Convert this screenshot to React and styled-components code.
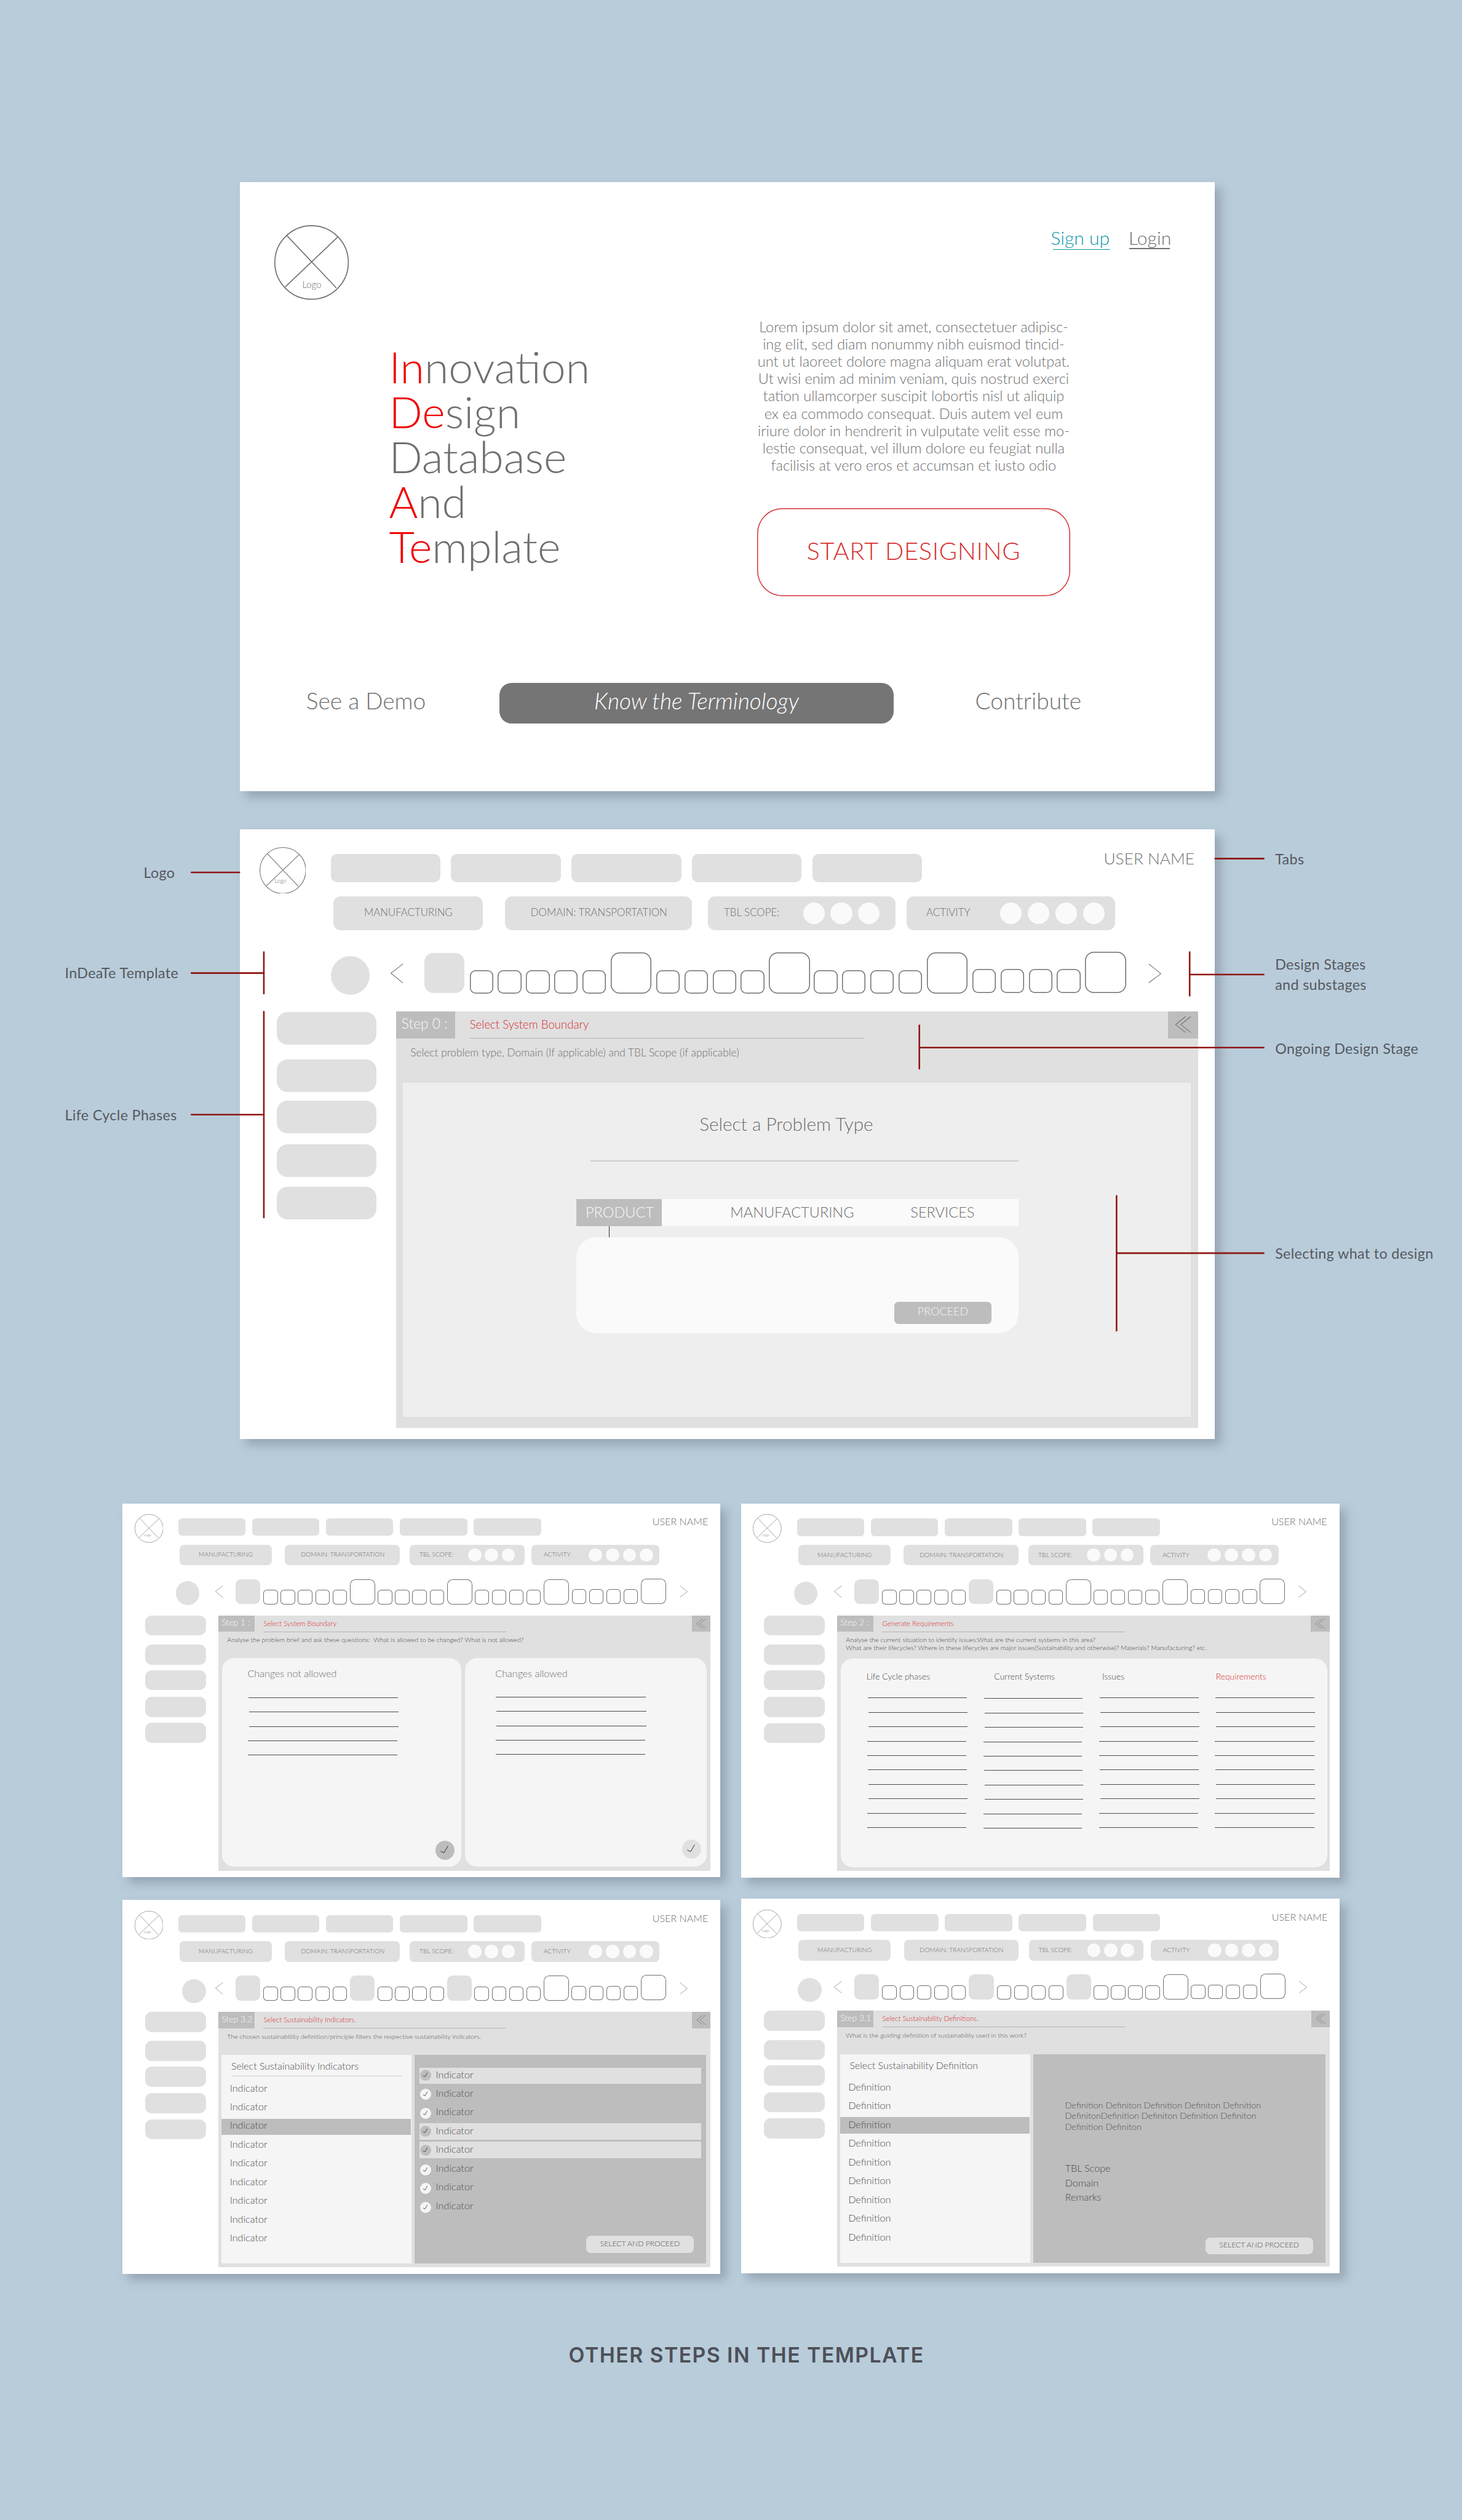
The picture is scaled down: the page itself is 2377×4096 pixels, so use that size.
import React from 'react';
import styled, { createGlobalStyle, css } from 'styled-components';

/* Every length is a multiple of --u, so a board can be scaled by changing one variable. */
const u = (n) => `calc(var(--u) * ${n})`;

const INK = '#707070';
const DARK = '#464646';
const FILL = '#e0e0e0';
const MID = '#bdbdbd';
const RED = '#d63030';
const LEADER = '#8e1511';

const GlobalStyle = createGlobalStyle`
  html, body { margin: 0; padding: 0; background: #b9ccda; }
  *, *::before, *::after { box-sizing: border-box; }
`;

const Page = styled.main`
  --u: 0.5826px;
  width: 2377px;
  height: 4096px;
  overflow: hidden;
  padding-top: ${u(508)};
  background: #b9ccda;
  font-family: Lato, 'Liberation Sans', sans-serif;
  font-weight: 300;
  line-height: 1.2;
  color: ${INK};
  white-space: pre;
`;

const cardShadow = css`
  box-shadow: 10px 10px 15px rgba(88, 98, 112, 0.36);
`;

/* ---------- Landing screen ---------- */

const Landing = styled.section`
  width: ${u(2720)};
  height: ${u(1699.5)};
  margin-left: ${u(669.5)};
  background: #fff;
  ${cardShadow}
`;

const LandingTop = styled.header`
  display: flex;
  height: ${u(329)};
  padding: ${u(121)} ${u(121)} 0 ${u(96.5)};
`;

const LogoMark = styled.svg`
  flex: none;
  width: ${(p) => u(p.$size)};
  height: ${(p) => u(p.$size)};
  fill: none;
  stroke: ${INK};
  stroke-width: 2.8;
  text {
    fill: ${INK};
    stroke: none;
    font-size: 25.5px;
  }
`;

const AuthLinks = styled.nav`
  display: flex;
  gap: ${u(53)};
  margin-left: auto;
  padding-top: ${u(3.3)};
`;

const AuthLink = styled.a`
  height: ${(p) => u(p.$drop)};
  color: ${(p) => p.$tone};
  font-size: ${u(51.7)};
  &::after {
    content: '';
    display: block;
    height: 1.5px;
    margin: ${(p) => u(p.$drop - 62)} ${(p) => u(p.$trimRight)} 0 ${(p) => u(p.$trimLeft)};
    background: ${(p) => p.$tone};
  }
`;

const Hero = styled.div`
  display: flex;
  height: ${u(826.5)};
  padding-left: ${u(416)};
`;

const Acronym = styled.h1`
  width: ${u(1027.2)};
  margin: ${u(122)} 0 0;
  font-size: ${u(123)};
  font-weight: 300;
  line-height: ${u(125.4)};
`;

const AcronymLetters = styled.span`
  color: #f00000;
`;

const Pitch = styled.div`
  width: ${u(874)};
  padding-top: ${u(50.2)};
`;

const Blurb = styled.p`
  margin: 0;
  text-align: center;
  font-size: ${u(40.5)};
  line-height: ${u(48.3)};
`;

const StartButton = styled.div`
  display: flex;
  align-items: center;
  justify-content: center;
  height: ${u(245)};
  margin-top: ${u(96.6)};
  padding-bottom: ${u(11)};
  border-radius: ${u(70)};
  box-shadow: inset 0 0 0 1.5px ${RED};
  color: ${RED};
  font-size: ${u(68.5)};
  letter-spacing: ${u(1.1)};
`;

const LandingFooter = styled.footer`
  display: grid;
  grid-template-columns: ${u(539)} ${u(1101)} 1fr;
  height: ${u(113)};
  margin-top: ${u(241.8)};
  padding-left: ${u(185)};
  font-size: ${u(63.7)};
`;

const FooterLink = styled.a`
  display: flex;
  align-items: center;
  padding: 0 0 ${u(12)} ${(p) => u(p.$indent)};
`;

const FooterButton = styled(FooterLink)`
  justify-content: center;
  border-radius: ${u(34)};
  background: #757575;
  color: #fff;
  font-style: italic;
`;

/* ---------- Board shell ---------- */

const Board = styled.section`
  --u: ${(p) => 0.5826 * p.$scale}px;
  flex: none;
  width: ${u(2720)};
  height: ${u(1700)};
  background: #fff;
  ${cardShadow}
`;

const BoardHeader = styled.header`
  display: flex;
  height: ${u(281)};
  padding: ${u(49)} ${u(56)} 0 ${u(54)};
`;

const HeaderNav = styled.div`
  flex: 1;
  margin: ${u(19)} 0 0 ${u(69.5)};
`;

const TabRow = styled.div`
  display: flex;
  gap: ${u(29.5)};
`;

const TabBlock = styled.div`
  width: ${u(306.5)};
  height: ${u(79)};
  border-radius: ${u(17)};
  background: ${FILL};
`;

const UserName = styled.div`
  margin: ${u(-13.6)} 0 0 auto;
  font-size: ${u(45.1)};
`;

const ChipRow = styled.div`
  display: flex;
  margin: ${u(40)} 0 0 ${u(7)};
`;

const Chip = styled.div`
  display: flex;
  flex: none;
  align-items: center;
  width: ${(p) => u(p.$width)};
  height: ${u(94)};
  margin-left: ${(p) => u(p.$gap)};
  padding: 0 ${(p) => u(p.$padRight)} 0 ${(p) => u(p.$padLeft)};
  border-radius: ${u(20)};
  background: ${FILL};
  font-size: ${u(28.95)};
`;

const ChipLabel = styled.span`
  padding-bottom: ${u(5)};
`;

const Dots = styled.span`
  display: flex;
  gap: ${(p) => u(p.$gap)};
  margin-left: auto;
`;

const Dot = styled.i`
  width: ${u(60.5)};
  height: ${u(60.5)};
  border-radius: 50%;
  background: #fafafa;
`;

const StageRow = styled.div`
  display: flex;
  height: ${u(115)};
  margin-top: ${u(62.3)};
`;

const BadgeSlot = styled.div`
  flex: none;
  width: ${u(421.3)};
  padding: ${(p) => u(p.$y)} 0 0 ${(p) => u(p.$x)};
`;

const StageBadge = styled.div`
  width: ${u(108.5)};
  height: ${u(108.5)};
  border-radius: 50%;
  background: ${FILL};
`;

const Chevron = styled.svg`
  flex: none;
  width: ${u(36)};
  height: ${u(56)};
  margin: ${u(30)} 0 0 ${(p) => u(p.$before)};
  fill: none;
  stroke: ${INK};
  stroke-width: 1.8;
`;

const Cluster = styled.div`
  display: flex;
  align-items: flex-end;
  gap: ${u(12.8)};
  margin: 0 0 ${(p) => u(p.$raise || 0)} ${(p) => u(p.$before)};
`;

const Substage = styled.div`
  width: ${u(65.8)};
  height: ${u(65.5)};
  border-radius: ${u(16)};
  box-shadow: inset 0 0 0 max(${u(2.6)}, 1px) ${INK};
`;

const Stage = styled.div`
  width: ${u(114.7)};
  height: ${u(114.5)};
  border-radius: ${u(25)};
  ${(p) =>
    p.$filled
      ? css`
          width: ${u(112.7)};
          height: ${u(112.7)};
          margin: 0 ${u(1)} ${u(1.2)};
          background: ${FILL};
        `
      : css`
          box-shadow: inset 0 0 0 max(${u(2.6)}, 1px) ${INK};
        `}
`;

const Workspace = styled.div`
  display: flex;
  margin-top: ${u(50)};
`;

const PhaseList = styled.aside`
  flex: none;
  width: ${u(436)};
  padding: ${u(0.7)} ${u(54.7)} 0 ${u(103.7)};
`;

const Phase = styled.div`
  height: ${u(91)};
  margin-top: ${(p) => u(p.$gap)};
  border-radius: ${u(30)};
  background: ${FILL};
`;

const Panel = styled.div`
  width: ${u(2239)};
  height: ${u(1162)};
  background: ${FILL};
`;

const PanelHead = styled.div`
  height: ${(p) => u(p.$height)};
`;

const PanelBar = styled.div`
  display: flex;
  height: ${u(74.3)};
`;

const StepBadge = styled.div`
  flex: none;
  width: ${u(165.5)};
  padding: ${u(9.8)} 0 0 ${u(15)};
  background: ${MID};
  color: #f9f9f9;
  font-size: ${u(39)};
`;

const PanelTitle = styled.h2`
  width: ${u(1103)};
  height: ${u(76)};
  margin: 0 0 0 ${u(40)};
  padding-top: ${u(17)};
  border-bottom: 1px solid #b4b4b4;
  color: ${RED};
  font-size: ${u(31.9)};
  font-weight: 300;
`;

const Collapse = styled.div`
  width: ${u(84.6)};
  margin-left: auto;
  background: ${MID};
  svg {
    display: block;
    width: 100%;
    height: 100%;
    fill: none;
    stroke: ${INK};
    stroke-width: 1.8;
  }
`;

const PanelNote = styled.p`
  margin: ${(p) => u(p.$drop)} 0 0 ${u(40)};
  color: ${(p) => p.$tone};
  font-size: ${u(29.7)};
  line-height: ${u(35.4)};
`;

/* ---------- Step 0 ---------- */

const ProblemArea = styled.div`
  width: ${u(2199)};
  height: ${u(930.5)};
  margin-left: ${u(19)};
  padding: ${u(82.7)} 0 0 ${u(2)};
  background: #eeeeee;
`;

const ProblemTitle = styled.h3`
  height: ${u(61.5)};
  margin: 0 0 ${u(71)} ${u(825.5)};
  font-size: ${u(51.1)};
  font-weight: 300;
`;

const ProblemRule = styled.hr`
  width: ${u(1196)};
  height: 2px;
  margin: 0 0 ${u(105)} ${u(520.7)};
  border: 0;
  background: #cfcfcf;
`;

const TypeBar = styled.div`
  display: grid;
  grid-template-columns: ${u(239)} ${u(694)} 1fr;
  width: ${u(1234)};
  height: ${u(76)};
  margin-left: ${u(481.5)};
  background: #fafafa;
  font-size: ${u(40.5)};
`;

const TypeTab = styled.div`
  display: flex;
  align-items: center;
  padding: 0 0 ${u(2)} ${(p) => u(p.$indent)};
  ${(p) =>
    p.$active &&
    css`
      background: ${MID};
      color: #f9f9f9;
    `}
`;

const Connector = styled.div`
  width: 1.5px;
  height: ${u(30)};
  margin-left: ${u(572.5)};
  background: #333;
`;

const TypeDetail = styled.div`
  display: flex;
  align-items: flex-end;
  justify-content: flex-end;
  width: ${u(1234)};
  height: ${u(268.4)};
  margin-left: ${u(481.5)};
  padding: 0 ${u(75.5)} ${u(25.5)} 0;
  border-radius: ${u(55)};
  background: #fafafa;
`;

const ProceedButton = styled.div`
  display: flex;
  align-items: center;
  justify-content: center;
  width: ${u(270)};
  height: ${u(62.5)};
  padding-bottom: ${u(6)};
  border-radius: ${u(11)};
  background: ${MID};
  color: #f6f6f6;
  font-size: ${u(31)};
`;

/* ---------- Steps 1 and 2 ---------- */

const Sheets = styled.div`
  display: flex;
  gap: ${u(16.8)};
  padding-left: ${(p) => u(p.$inset)};
`;

const Sheet = styled.div`
  display: flex;
  flex-direction: column;
  width: ${(p) => u(p.$width)};
  height: ${u(948)};
  border-radius: ${u(54)};
  background: #f5f5f5;
`;

const SheetTitle = styled.h3`
  height: ${u(54)};
  margin: ${u(41)} 0 0 ${(p) => u(p.$indent)};
  font-size: ${u(45.1)};
  font-weight: 300;
`;

const Rules = styled.div`
  display: flex;
  flex-direction: column;
  gap: calc(${u(65.5)} - 1px);
  padding: ${(p) => u(p.$top)} 0 0 ${(p) => u(p.$indent)};
`;

const Rule = styled.i`
  flex: none;
  width: ${(p) => u(p.$width)};
  height: 1px;
  margin-left: ${(p) => u(p.$shift)};
  background: #4c4c4c;
`;

const CheckMark = styled.svg`
  flex: none;
  width: ${(p) => u(p.$size)};
  height: ${(p) => u(p.$size)};
  fill: none;
  stroke: #222;
  stroke-width: ${(p) => p.$stroke};
  circle {
    fill: ${(p) => p.$tone};
    stroke: none;
  }
`;

const SheetCheck = styled.div`
  display: flex;
  margin: auto ${(p) => u(p.$right)} ${(p) => u(p.$bottom)} auto;
`;

const TableSheet = styled(Sheet)`
  width: ${u(2210)};
  display: block;
`;

const TableHead = styled.div`
  display: grid;
  grid-template-columns: ${u(580.7)} ${u(491.3)} ${u(516.3)} 1fr;
  height: ${u(104)};
  padding: ${u(57.5)} 0 0 ${u(116)};
  color: ${DARK};
  font-size: ${u(38.9)};
`;

const TableTitle = styled.span`
  color: ${(p) => (p.$accent ? RED : 'inherit')};
`;

const TableColumns = styled.div`
  display: grid;
  grid-template-columns: ${u(528.5)} ${u(525.5)} ${u(527)} 1fr;
  padding-left: ${u(121.5)};
`;

/* ---------- Step 3 ---------- */

const Split = styled.div`
  display: flex;
  gap: ${(p) => u(p.$gap)};
  padding-left: ${(p) => u(p.$inset)};
`;

const ListPane = styled.div`
  width: ${u(865)};
  height: ${u(949)};
  background: #f5f5f5;
  color: #505050;
  font-size: ${u(45.3)};
`;

const ListTitle = styled.h3`
  height: ${(p) => u(p.$height)};
  width: ${u(777.7)};
  margin: 0 0 ${(p) => u(p.$after)} ${u(44)};
  padding-top: ${u(23.5)};
  border-bottom: 1px solid ${(p) => (p.$ruled ? '#cccccc' : 'transparent')};
  font-size: ${u(44.7)};
  font-weight: 300;
`;

const ListItem = styled.div`
  width: ${u(862)};
  height: ${u(74.3)};
  margin-bottom: ${u(10.9)};
  padding: ${(p) => u(p.$lift)} 0 0 ${u(37.5)};
  background: ${(p) => (p.$selected ? MID : 'transparent')};
`;

const DetailPane = styled.div`
  width: ${u(1327)};
  height: ${u(949)};
  background: ${MID};
  color: #555;
`;

const CheckList = styled.div`
  height: ${u(824.6)};
  padding: ${u(58.3)} 0 0 ${u(21.2)};
  font-size: ${u(45.3)};
`;

const CheckRow = styled.div`
  display: flex;
  width: ${u(1283)};
  height: ${u(74.3)};
  margin-bottom: ${u(10.3)};
  padding-left: ${u(5)};
  background: ${(p) => (p.$selected ? FILL : 'transparent')};
`;

const CheckSlot = styled.span`
  display: flex;
  width: ${u(70.5)};
  padding-top: ${(p) => u(p.$drop)};
`;

const CheckLabel = styled.span`
  padding-top: ${(p) => u(p.$drop)};
`;

const DefinitionText = styled.p`
  height: ${u(485.7)};
  margin: 0;
  padding: ${u(207.5)} 0 0 ${u(143)};
  font-size: ${u(40.6)};
  line-height: ${u(49)};
`;

const FactList = styled.div`
  height: ${u(346.9)};
  padding-left: ${u(144)};
  color: #4c4c4c;
  font-size: ${u(45)};
  line-height: ${u(65.2)};
`;

const SelectButton = styled.div`
  display: flex;
  align-items: center;
  justify-content: center;
  width: ${u(489)};
  height: ${u(76)};
  margin-left: ${u(781)};
  padding-bottom: ${u(5)};
  border-radius: ${u(22)};
  background: ${FILL};
  color: #555;
  font-size: ${u(34)};
`;

/* ---------- Annotated board and gallery ---------- */

const Annotated = styled.section`
  position: relative;
  display: flex;
  margin-top: ${u(106.5)};
`;

const Notes = styled.div`
  flex: none;
  width: ${u(669.5)};
  padding-left: ${(p) => u(p.$indent)};
  color: #55595f;
  font-size: ${u(40)};
  font-weight: 400;
  letter-spacing: ${u(0.6)};
  line-height: ${u(55.5)};
`;

const Note = styled.div`
  margin: ${(p) => u(p.$gap)} 0 0 ${(p) => u(p.$indent || 0)};
`;

/* Leader lines run from the margin notes across the board they describe. */
const Leaders = styled.svg`
  position: absolute;
  top: 0;
  left: 0;
  width: ${u(4080)};
  height: ${u(1700)};
  stroke: ${LEADER};
  stroke-width: 4.4;
  fill: none;
`;

const Gallery = styled.section`
  display: flex;
  gap: ${u(58)};
  margin-top: ${u(181)};
  padding-left: ${u(342)};
`;

const GalleryColumn = styled.div`
  display: flex;
  flex-direction: column;
  gap: ${(p) => u(p.$gap)};
`;

const GalleryCaption = styled.h2`
  margin: ${u(193)} 0 0 ${u(1587)};
  color: #4d5058;
  font-family: Inter, Lato, sans-serif;
  font-size: ${u(58)};
  font-weight: 600;
  letter-spacing: ${u(2.45)};
  line-height: ${u(70)};
`;

/* ---------- Pieces ---------- */

const Logo = ({ size, x, y }) => (
  <LogoMark $size={size} viewBox="0 0 208 208">
    <circle cx="104" cy="104" r="102.6" />
    <path d="M34 28L173 175M177.6 32.4L30.3 172.4" />
    <text x={x} y={y}>Logo</text>
  </LogoMark>
);

const Check = ({ size, tone, stroke }) => (
  <CheckMark $size={size} $tone={tone} $stroke={stroke} viewBox="-43 -43 86 86">
    <circle r="43" />
    <path d="M-20 4.5L-4.4 11.3L13.4 -19.6" />
  </CheckMark>
);

const PHASE_GAPS = [0, 41, 25.5, 30.5, 27.7];
const CLUSTERS = [
  { count: 0, before: 56 },
  { count: 5, before: 13.3 },
  { count: 4, before: 13.2 },
  { count: 4, before: 11 },
  { count: 4, before: 13.4, raise: 2.6 },
];

const range = (n) => Array.from({ length: n }, (_, i) => i);

function StepBoard({
  scale = 1,
  badge,
  filled = 1,
  step,
  title,
  note,
  noteTone = INK,
  noteDrop = 20,
  headHeight,
  children,
}) {
  return (
    <Board $scale={scale}>
      <BoardHeader>
        <Logo size={130} x={67} y={159} />
        <HeaderNav>
          <TabRow>
            {range(5).map((i) => <TabBlock key={i} />)}
            <UserName>USER NAME</UserName>
          </TabRow>
          <ChipRow>
            <Chip $width={418} $gap={0} $padLeft={86} $padRight={0}>
              <ChipLabel>MANUFACTURING</ChipLabel>
            </Chip>
            <Chip $width={522} $gap={61} $padLeft={72} $padRight={0}>
              <ChipLabel>DOMAIN: TRANSPORTATION</ChipLabel>
            </Chip>
            <Chip $width={522} $gap={45.5} $padLeft={44} $padRight={43.5}>
              <ChipLabel>TBL SCOPE:</ChipLabel>
              <Dots $gap={16}>{range(3).map((i) => <Dot key={i} />)}</Dots>
            </Chip>
            <Chip $width={582} $gap={32} $padLeft={54.5} $padRight={29}>
              <ChipLabel>ACTIVITY</ChipLabel>
              <Dots $gap={17}>{range(4).map((i) => <Dot key={i} />)}</Dots>
            </Chip>
          </ChipRow>
        </HeaderNav>
      </BoardHeader>
      <StageRow>
        <BadgeSlot $x={badge[0]} $y={badge[1] - 343.3}><StageBadge /></BadgeSlot>
        <Chevron $before={0} viewBox="0 0 36 56"><path d="M35 1L1 27L35 55" /></Chevron>
        {CLUSTERS.map((c, i) => (
          <Cluster key={i} $before={c.before} $raise={c.raise}>
            {range(c.count).map((n) => <Substage key={n} />)}
            <Stage $filled={i < filled} />
          </Cluster>
        ))}
        <Chevron $before={62.5} viewBox="0 0 36 56"><path d="M1 1L35 28.5L1 54" /></Chevron>
      </StageRow>
      <Workspace>
        <PhaseList>
          {PHASE_GAPS.map((g, i) => <Phase key={i} $gap={g} />)}
        </PhaseList>
        <Panel>
          <PanelHead $height={headHeight}>
            <PanelBar>
              <StepBadge>{step}</StepBadge>
              <PanelTitle>{title}</PanelTitle>
              <Collapse>
                <svg viewBox="0 0 84.6 74">
                  <path d="M49 14L21.3 36.5L49 58.5M63.5 14L35.8 36.5L63.5 58.5" />
                </svg>
              </Collapse>
            </PanelBar>
            <PanelNote $tone={noteTone} $drop={noteDrop}>{note}</PanelNote>
          </PanelHead>
          {children}
        </Panel>
      </Workspace>
    </Board>
  );
}

const SHIFTS = [0, 3, 3, -2, -2];

const RuleColumn = ({ count, width, top, indent = 0 }) => (
  <Rules $top={top} $indent={indent}>
    {range(count).map((i) => <Rule key={i} $width={width} $shift={SHIFTS[i % 5]} />)}
  </Rules>
);

const CHECK_ROWS = [
  { selected: true, mark: 11, text: 3 },
  { mark: 12.5, text: 4 },
  { mark: 13.5, text: 4 },
  { selected: true, mark: 11.5, text: 5 },
  { selected: true, mark: 12.5, text: 5.5 },
  { mark: 17, text: 6 },
  { mark: 18.5, text: 6.5 },
  { mark: 19.5, text: 7 },
];

const ACRONYM = [
  ['In', 'novation'],
  ['De', 'sign'],
  ['', 'Database'],
  ['A', 'nd'],
  ['Te', 'mplate'],
];

const BLURB = `Lorem ipsum dolor sit amet, consectetuer adipisc-
ing elit, sed diam nonummy nibh euismod tincid-
unt ut laoreet dolore magna aliquam erat volutpat.
Ut wisi enim ad minim veniam, quis nostrud exerci
tation ullamcorper suscipit lobortis nisl ut aliquip
ex ea commodo consequat. Duis autem vel eum
iriure dolor in hendrerit in vulputate velit esse mo-
lestie consequat, vel illum dolore eu feugiat nulla
facilisis at vero eros et accumsan et iusto odio`;

export default function App() {
  return (
    <Page>
      <GlobalStyle />
      <Landing>
        <LandingTop>
          <Logo size={208} x={78} y={175.4} />
          <AuthLinks>
            <AuthLink $tone="#0f97a7" $drop={62} $trimLeft={6.5} $trimRight={-2}>Sign up</AuthLink>
            <AuthLink $tone={INK} $drop={59.5} $trimLeft={1} $trimRight={4}>Login</AuthLink>
          </AuthLinks>
        </LandingTop>
        <Hero>
          <Acronym>
            {ACRONYM.map(([lead, rest]) => (
              <div key={rest}>
                {lead && <AcronymLetters>{lead}</AcronymLetters>}
                {rest}
              </div>
            ))}
          </Acronym>
          <Pitch>
            <Blurb>{BLURB}</Blurb>
            <StartButton>START DESIGNING</StartButton>
          </Pitch>
        </Hero>
        <LandingFooter>
          <FooterLink $indent={0}>See a Demo</FooterLink>
          <FooterButton $indent={0}>Know the Terminology</FooterButton>
          <FooterLink $indent={227}>Contribute</FooterLink>
        </LandingFooter>
      </Landing>

      <Annotated>
        <Notes $indent={181}>
          <Note $gap={92.6} $indent={220}>Logo</Note>
          <Note $gap={224.7}>InDeaTe Template</Note>
          <Note $gap={340.5}>Life Cycle Phases</Note>
        </Notes>
        <StepBoard
          badge={[254.4, 353.4]}
          step="Step 0 :"
          title="Select System Boundary"
          note="Select problem type, Domain (If applicable) and TBL Scope (if applicable)"
          noteDrop={22.5}
          headHeight={199.5}
        >
          <ProblemArea>
            <ProblemTitle>Select a Problem Type</ProblemTitle>
            <ProblemRule />
            <TypeBar>
              <TypeTab $active $indent={26}>PRODUCT</TypeTab>
              <TypeTab $indent={191}>MANUFACTURING</TypeTab>
              <TypeTab $indent={0}>SERVICES</TypeTab>
            </TypeBar>
            <Connector />
            <TypeDetail>
              <ProceedButton>PROCEED</ProceedButton>
            </TypeDetail>
          </ProblemArea>
        </StepBoard>
        <Notes $indent={169}>
          <Note $gap={54.8}>Tabs</Note>
          <Note $gap={238.8}>{'Design Stages\nand substages'}</Note>
          <Note $gap={122.7}>Ongoing Design Stage</Note>
          <Note $gap={517.5}>Selecting what to design</Note>
        </Notes>
        <Leaders viewBox="0 0 4080 1700">
          <path d="M532.5 120.3H670" />
          <path d="M532.5 401H736.3M736.3 340.7V460" />
          <path d="M532.5 796H736.3M736.3 507V1084.8" />
          <path d="M3389.5 81.8H3528.5" />
          <path d="M3320 405H3528.5M3320 340.8V466" />
          <path d="M2565.6 609H3528.5M2565.6 544.8V670" />
          <path d="M3116 1182.4H3528.5M3116 1020.7V1400.7" />
        </Leaders>
      </Annotated>

      <Gallery>
        <GalleryColumn $gap={63.4}>
          <StepBoard
            scale={0.6134}
            badge={[241.8, 353.8]}
            step="Step 1 :"
            title="Select System Boundary"
            note="Analyse the problem brief and ask these questions:  What is allowed to be changed? What is not allowed?"
            noteTone={DARK}
            headHeight={195}
          >
            <Sheets $inset={16.5}>
              <Sheet $width={1089.7}>
                <SheetTitle $indent={116}>Changes not allowed</SheetTitle>
                <RuleColumn count={5} width={681} top={83} indent={119.5} />
                <SheetCheck $right={31.1} $bottom={32}>
                  <Check size={86.6} tone={MID} stroke={2.6} />
                </SheetCheck>
              </Sheet>
              <Sheet $width={1099.4}>
                <SheetTitle $indent={137}>Changes allowed</SheetTitle>
                <RuleColumn count={5} width={681} top={80} indent={140} />
                <SheetCheck $right={25.6} $bottom={35.7}>
                  <Check size={86.6} tone={FILL} stroke={2.6} />
                </SheetCheck>
              </Sheet>
            </Sheets>
          </StepBoard>
          <StepBoard
            scale={0.6134}
            badge={[272, 360]}
            filled={3}
            step="Step 3.2 :"
            title="Select Sustainability Indicators."
            note="The chosen sustainablility definition/principle filters the respective sustainability indicators."
            noteTone="#585858"
            headHeight={195}
          >
            <Split $inset={14.6} $gap={13}>
              <ListPane>
                <ListTitle $ruled $height={98} $after={23.2}>Select Sustainability Indicators</ListTitle>
                {range(9).map((i) => (
                  <ListItem key={i} $selected={i === 2} $lift={1.5}>Indicator</ListItem>
                ))}
              </ListPane>
              <DetailPane>
                <CheckList>
                  {CHECK_ROWS.map((row, i) => (
                    <CheckRow key={i} $selected={row.selected}>
                      <CheckSlot $drop={row.mark}>
                        <Check size={50.4} tone={row.selected ? MID : '#f5f5f5'} stroke={3.6} />
                      </CheckSlot>
                      <CheckLabel $drop={row.text}>Indicator</CheckLabel>
                    </CheckRow>
                  ))}
                </CheckList>
                <SelectButton>SELECT AND PROCEED</SelectButton>
              </DetailPane>
            </Split>
          </StepBoard>
        </GalleryColumn>
        <GalleryColumn $gap={59}>
          <StepBoard
            scale={0.6138}
            badge={[239.5, 354]}
            filled={2}
            step="Step 2 :"
            title="Generate Requirements"
            note={'Analyse the current situation to identify issues:What are the current systems in this area?\nWhat are their lifecycles? Where in these lifecycles are major issues(Sustainability and otherwise)? Materials? Manufacturing? etc.'}
            noteTone={DARK}
            headHeight={196.5}
          >
            <Sheets $inset={17.6}>
              <TableSheet>
                <TableHead>
                  <TableTitle>Life Cycle phases</TableTitle>
                  <TableTitle>Current Systems</TableTitle>
                  <TableTitle>Issues</TableTitle>
                  <TableTitle $accent>Requirements</TableTitle>
                </TableHead>
                <TableColumns>
                  <RuleColumn count={10} width={451} top={73.2} />
                  <RuleColumn count={10} width={448} top={76} />
                  <RuleColumn count={10} width={451} top={73.2} />
                  <RuleColumn count={10} width={451} top={73.2} />
                </TableColumns>
              </TableSheet>
            </Sheets>
          </StepBoard>
          <StepBoard
            scale={0.6142}
            badge={[257.3, 360]}
            filled={3}
            step="Step 3.1 :"
            title="Select Sustainability Definitions."
            note="What is the guiding definition of sustainability used in this work?"
            noteTone="#585858"
            headHeight={197}
          >
            <Split $inset={13.2} $gap={14}>
              <ListPane>
                <ListTitle $height={98.5} $after={17.8}>Select Sustainability Definition</ListTitle>
                {range(9).map((i) => (
                  <ListItem key={i} $selected={i === 2} $lift={5}>Definition</ListItem>
                ))}
              </ListPane>
              <DetailPane>
                <DefinitionText>
                  {'Definition Definiton Definition Definiton Definition\nDefinitonDefinition Definiton Definition Definiton\nDefinition Definiton'}
                </DefinitionText>
                <FactList>{'TBL Scope\nDomain\nRemarks'}</FactList>
                <SelectButton>SELECT AND PROCEED</SelectButton>
              </DetailPane>
            </Split>
          </StepBoard>
        </GalleryColumn>
      </Gallery>
      <GalleryCaption>OTHER STEPS IN THE TEMPLATE</GalleryCaption>
    </Page>
  );
}
